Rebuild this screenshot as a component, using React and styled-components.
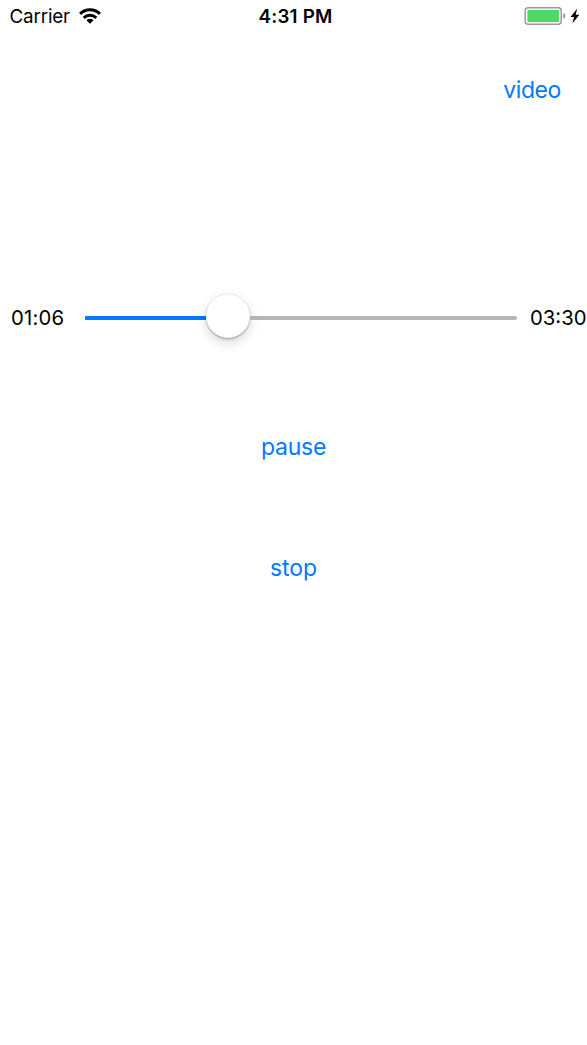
import React from "react";
import styled, { createGlobalStyle } from "styled-components";

const GlobalStyle = createGlobalStyle`
  * { box-sizing: border-box; }
  body { margin: 0; background: #fff; }
`;

const Screen = styled.main`
  display: flex;
  flex-direction: column;
  width: 587px;
  height: 1045px;
  overflow: hidden;
  background: #fff;
  color: #000;
  font-family: Inter, "Liberation Sans", sans-serif;
`;

const StatusBar = styled.header`
  display: grid;
  grid-template-columns: 1fr auto 1fr;
  align-items: center;
  height: 32px;
  padding: 0 7px 0 9px;
  font-size: 18.8px;
`;

const StatusGroup = styled.div`
  display: flex;
  align-items: center;
  justify-content: ${({ $end }) => ($end ? "flex-end" : "flex-start")};
  gap: ${({ $gap }) => $gap}px;
`;

const Carrier = styled.span`
  width: 61px;
  padding-left: 0.5px;
  letter-spacing: -0.15px;
  white-space: nowrap;
`;

const Clock = styled.time`
  padding-left: 2px;
  font-weight: 600;
  letter-spacing: 0.2px;
  white-space: nowrap;
`;

const Icon = styled.svg`
  display: block;
  flex: none;
`;

const Toolbar = styled.nav`
  display: flex;
  justify-content: flex-end;
  padding: 40px 26px 0 0;
`;

const TextButton = styled.button`
  height: 36px;
  padding: 0;
  border: 0;
  background: none;
  color: #007aff;
  font-family: inherit;
  font-size: 23px;
  line-height: 36px;
  letter-spacing: ${({ $tracking = 0 }) => $tracking}px;
  cursor: pointer;
`;

const Player = styled.section`
  display: grid;
  grid-template-columns: 74px 432px 70px;
  align-items: center;
  height: 48px;
  margin: 186px 0 0 11px;
`;

const TimeLabel = styled.span`
  padding-left: ${({ $inset = 0 }) => $inset}px;
  font-size: 20.3px;
  line-height: 28px;
  letter-spacing: ${({ $tracking = 0 }) => $tracking}px;
  white-space: nowrap;
`;

const Slider = styled.div`
  display: flex;
  align-items: center;
  height: 48px;
`;

const Track = styled.div`
  width: ${({ $width }) => $width};
  flex: ${({ $width }) => ($width ? "none" : "1")};
  height: 4px;
  background: ${({ $filled }) => ($filled ? "#007aff" : "#b5b5b5")};
  border-radius: ${({ $filled }) => ($filled ? "1px 0 0 1px" : "0 2px 2px 0")};
`;

const Thumb = styled.div`
  flex: none;
  width: 44px;
  height: 44px;
  margin-bottom: 4px;
  border-radius: 50%;
  background: #fff;
  box-shadow: 0 0 1px rgba(0, 0, 0, 0.3), 0 1.5px 2px rgba(0, 0, 0, 0.22),
    0 5px 12px rgba(0, 0, 0, 0.15);
`;

const Controls = styled.section`
  display: flex;
  flex-direction: column;
  align-items: center;
  gap: 85px;
  margin-top: 87px;
`;

function WifiIcon() {
  return (
    <Icon width="22" height="16" viewBox="0 0 22 16">
      <g fill="none" stroke="#000" strokeWidth="3">
        <path d="M1.1 5.9C6.7.5 15.3.5 20.9 5.9" />
        <path d="M4.7 9.8C8.3 6.5 13.7 6.5 17.3 9.8" />
      </g>
      <path d="M7.4 12.2C9.5 10.4 12.5 10.4 14.6 12.2L11 15.8Z" />
    </Icon>
  );
}

function BatteryIcon() {
  return (
    <Icon width="42" height="18" viewBox="0 0 42 18">
      <rect x="1.2" y=".8" width="36" height="16.4" rx="3" fill="none" stroke="#9b9b9b" strokeWidth="1.5" />
      <rect x="3.4" y="3" width="31.8" height="12" rx="1" fill="#4cd964" />
      <path d="M39.2 6.1C42 6.8 42 11.2 39.2 11.9Z" fill="#9b9b9b" />
    </Icon>
  );
}

function BoltIcon() {
  return (
    <Icon width="10" height="16" viewBox="0 0 10 16">
      <path d="M7.3.4.5 9H4.2L2.3 15.6 9.4 6.8H5.6Z" />
    </Icon>
  );
}

export default function App() {
  return (
    <Screen>
      <GlobalStyle />
      <StatusBar>
        <StatusGroup $gap={9}>
          <Carrier>Carrier</Carrier>
          <WifiIcon />
        </StatusGroup>
        <Clock>4:31 PM</Clock>
        <StatusGroup $end $gap={4}>
          <BatteryIcon />
          <BoltIcon />
        </StatusGroup>
      </StatusBar>
      <Toolbar>
        <TextButton $tracking={-0.4}>video</TextButton>
      </Toolbar>
      <Player>
        <TimeLabel $tracking={0.2}>01:06</TimeLabel>
        <Slider role="slider" aria-valuemin={0} aria-valuemax={210} aria-valuenow={66}>
          <Track $filled $width="121px" />
          <Thumb />
          <Track />
        </Slider>
        <TimeLabel $inset={13}>03:30</TimeLabel>
      </Player>
      <Controls>
        <TextButton $tracking={-0.25}>pause</TextButton>
        <TextButton $tracking={-0.1}>stop</TextButton>
      </Controls>
    </Screen>
  );
}
